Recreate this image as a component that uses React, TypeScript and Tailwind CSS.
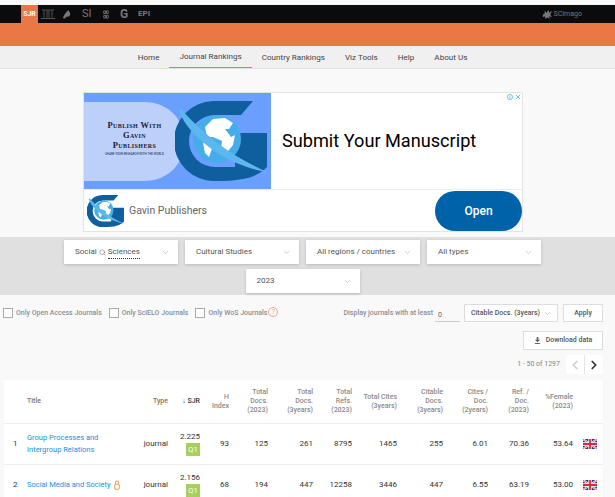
import { ChevronDown, ChevronLeft, ChevronRight, Search } from 'lucide-react'

const navItems = ['Home', 'Journal Rankings', 'Country Rankings', 'Viz Tools', 'Help', 'About Us']

const rowGrid =
    'grid grid-cols-[23px_107px_34px_32px_29px_39px_45px_39px_45px_46px_45px_41px_44px_1fr] items-center'

const headers = [
    'Type',
    'SJR',
    'H\nIndex',
    'Total\nDocs.\n(2023)',
    'Total\nDocs.\n(3years)',
    'Total\nRefs.\n(2023)',
    'Total Cites\n(3years)',
    'Citable\nDocs.\n(3years)',
    'Cites /\nDoc.\n(2years)',
    'Ref. /\nDoc.\n(2023)',
    '%Female\n(2023)',
]

const rows = [
    {
        rank: 1,
        title: 'Group Processes and Intergroup Relations',
        sjr: '2.225',
        values: ['93', '125', '261', '8795', '1465', '255', '6.01', '70.36', '53.64'],
        open: false,
    },
    {
        rank: 2,
        title: 'Social Media and Society',
        sjr: '2.156',
        values: ['68', '194', '447', '12258', '3446', '447', '6.55', '63.19', '53.00'],
        open: true,
    },
]

function GavinLogo({ className }: { className: string }) {
    return (
        <svg viewBox="0 0 92 80" className={className}>
            <path
                d="M38 0H78L66 14H40A26 26 0 0 0 40 66H60V32H92V66C82 76 70 80 40 80A40 40 0 0 1 38 0Z"
                fill="#0f5f9e"
            />
            <circle cx="42" cy="38" r="24" fill="#45aeea" />
            <path d="M30 26L38 18L50 17L58 22L54 28L50 28L56 36L60 34L58 44L50 54L46 48L47 40L38 36L32 36Z" fill="#ffffff" />
            <path d="M28 42L34 42L37 48L34 56L30 52Z" fill="#ffffff" />
            <path d="M4 10C14 36 50 64 92 71C62 58 30 36 6 8Z" fill="#5cb8ec" />
        </svg>
    )
}

function Flag() {
    return (
        <svg viewBox="0 0 14 10" className="w-[14px] h-[10px]">
            <rect width="14" height="10" fill="#27357f" />
            <path d="M0 0L14 10M14 0L0 10" stroke="#ffffff" strokeWidth="2" />
            <path d="M0 0L14 10M14 0L0 10" stroke="#d8293a" strokeWidth="0.7" />
            <path d="M7 0V10M0 5H14" stroke="#ffffff" strokeWidth="3.4" />
            <path d="M7 0V10M0 5H14" stroke="#d8293a" strokeWidth="1.8" />
        </svg>
    )
}

function Select({ label }: { label: React.ReactNode }) {
    return (
        <div className="w-[114px] h-[24px] bg-white shadow-[0_1px_3px_rgba(0,0,0,0.18)] flex items-center justify-between pl-[11px] pr-[8px] text-[8px] text-[#555]">
            <span>{label}</span>
            <ChevronDown className="w-[9px] h-[9px] text-[#bbb]" />
        </div>
    )
}

function Checkbox({ label }: { label: string }) {
    return (
        <div className="flex items-center gap-[3px]">
            <span className="w-[10px] h-[10px] border border-[#aaa] bg-white" />
            <span className="text-[7px] text-[#8a8f96] font-medium">{label}</span>
        </div>
    )
}

export default function App() {
    return (
        <div className="w-[615px] h-[497px] overflow-hidden bg-[#f9f9f9] pt-[5px] font-['Roboto','Liberation_Sans',sans-serif]">
            <div className="h-[18px] bg-[#0a0b0d] flex items-center justify-between pl-[21px] pr-[33px]">
                <div className="flex items-center h-full text-[#777] font-bold">
                    <span className="w-[17px] h-full bg-[#e8784a] text-white text-[7px] flex items-center justify-center">
                        SJR
                    </span>
                    <svg viewBox="0 0 14 10" className="w-[14px] h-[10px] ml-[3px]" fill="none" stroke="#777" strokeWidth="0.7">
                        <path d="M0 9.5H14M1 1H13M3 1.5V8.5M6 1.5V8.5M8 1.5V8.5M11 1.5V8.5" />
                    </svg>
                    <svg viewBox="0 0 12 12" className="w-[10px] h-[11px] ml-[7px]" fill="#777">
                        <path d="M1 10L3 6L6 2L8 1L10 5L9 8L5 9L3 11Z" />
                    </svg>
                    <span className="ml-[10px] w-[10px] text-[11px] font-normal">SI</span>
                    <svg viewBox="0 0 6 10" className="w-[6px] h-[9px] ml-[11px]" fill="none" stroke="#888" strokeWidth="0.8">
                        <path d="M0.5 1H2.5V4H0.5ZM3.5 1H5.5V4H3.5ZM0.5 6H2.5V9H0.5ZM3.5 6H5.5V9H3.5Z" />
                    </svg>
                    <span className="ml-[11px] w-[10px] text-[12px]">G</span>
                    <span className="ml-[8px] text-[8px]">EPI</span>
                </div>
                <div className="flex items-center gap-[1px] text-[#777] text-[7px]">
                    <svg viewBox="0 0 12 12" className="w-[11px] h-[11px]" fill="#777">
                        <path d="M1 6L3 5L3 2L5 4L7 1L8 4L11 2L9 6L11 9L8 8L8 11L6 9L4 11L3 8L1 9Z" />
                    </svg>
                    <span>SCImago</span>
                </div>
            </div>
            <div className="h-[23px] bg-[#e97844]" />
            <nav className="h-[23px] bg-[#f0f0f0] border-b border-[#e2e2e2] flex justify-center pr-[10px]">
                <div className="flex">
                    {navItems.map((item) => (
                        <div
                            key={item}
                            className={`px-[10px] flex items-center text-[8.1px] text-[#444] ${item === 'Journal Rankings' ? 'border-b border-[#e97844]' : ''}`}
                        >
                            {item}
                        </div>
                    ))}
                </div>
            </nav>

            <div className="mt-[23px] ml-[83px] w-[440px] h-[140px] bg-white border border-[#e4e4e4] relative flex flex-col">
                <div className="h-[97px] flex border-b border-[#eeeeee]">
                    <div className="w-[187px] bg-[#6a9eff] relative flex items-center overflow-hidden">
                        <div className="w-[101px] h-[79px] bg-[#bcd0fa] rounded-r-[40px] flex flex-col items-center pt-[18px] font-['Liberation_Serif',serif] font-bold text-[#1b2230] text-[8.5px] leading-[10px] tracking-[0.4px] [font-variant:small-caps]">
                            <span>Publish With</span>
                            <span>Gavin</span>
                            <span>Publishers</span>
                            <span className="font-['Roboto',sans-serif] text-[3px] leading-[8px] font-normal tracking-normal uppercase">
                                Share your research with the world
                            </span>
                        </div>
                        <GavinLogo className="absolute left-[91px] top-[8px] w-[92px] h-[80px]" />
                    </div>
                    <div className="flex-1 flex items-center pl-[11px] text-[18.15px] text-black">
                        Submit Your Manuscript
                    </div>
                </div>
                <div className="flex-1 flex items-center justify-between pl-[3px]">
                    <div className="flex items-center gap-[5px]">
                        <GavinLogo className="w-[37px] h-[36px]" />
                        <span className="text-[10.5px] text-[#666]">Gavin Publishers</span>
                    </div>
                    <div className="w-[87px] h-[40px] rounded-full bg-[#0062a8] text-white text-[12px] font-medium flex items-center justify-center">
                        Open
                    </div>
                </div>
                <div className="absolute right-[1px] top-[1px] flex items-center gap-[2px] text-[#3fb2d8]">
                    <svg viewBox="0 0 8 8" className="w-[6px] h-[6px]" fill="none" stroke="currentColor">
                        <circle cx="4" cy="4" r="3.4" />
                        <path d="M4 2V6" />
                    </svg>
                    <svg viewBox="0 0 8 8" className="w-[6px] h-[6px]" fill="none" stroke="currentColor">
                        <path d="M1 1L7 7M7 1L1 7" />
                    </svg>
                </div>
            </div>

            <div className="mt-[5px] h-[58px] bg-[#e0e0e0] flex flex-col items-center gap-[5px] pt-[3px] pr-[10px]">
                <div className="flex gap-[7px]">
                    <Select
                        label={
                            <span className="flex items-center gap-[2px]">
                                Social
                                <Search className="w-[7px] h-[7px] text-[#777]" />
                                <span className="border-b border-dotted border-[#333]">Sciences</span>
                            </span>
                        }
                    />
                    <Select label="Cultural Studies" />
                    <Select label="All regions / countries" />
                    <Select label="All types" />
                </div>
                <Select label="2023" />
            </div>

            <div className="mt-[9px] pl-[3px] pr-[12px] flex items-center justify-between h-[18px]">
                <div className="flex items-center gap-[7px]">
                    <Checkbox label="Only Open Access Journals" />
                    <Checkbox label="Only SciELO Journals" />
                    <div className="flex items-start">
                        <Checkbox label="Only WoS Journals" />
                        <span className="ml-[1px] -mt-[1px] w-[10px] h-[10px] rounded-full border border-[#f0a988] text-[#f0a988] text-[7px] leading-[9px] text-center">
                            ?
                        </span>
                    </div>
                </div>
                <div className="flex items-center">
                    <span className="text-[7px] text-[#8a8f96] font-medium">Display journals with at least</span>
                    <span className="ml-[2px] w-[25px] h-[14px] mt-[3px] border-b border-[#ccc] pl-[3px] text-[7px] text-[#666] leading-[14px]">
                        0
                    </span>
                    <div className="ml-[4px] w-[94px] h-[18px] border border-[#ddd] bg-white flex items-center justify-between pl-[6px] pr-[5px] text-[7px] text-[#555] font-medium whitespace-nowrap">
                        Citable Docs. (3years)
                        <ChevronDown className="w-[9px] h-[9px] text-[#bbb]" />
                    </div>
                    <div className="ml-[5px] w-[40px] h-[18px] border border-[#ddd] bg-white flex items-center justify-center text-[7px] text-[#555] font-medium">
                        Apply
                    </div>
                </div>
            </div>

            <div className="mt-[9px] pr-[12px] flex justify-end">
                <div className="w-[80px] h-[19px] border border-[#ddd] bg-white flex items-center justify-center gap-[5px] text-[7px] text-[#555] font-medium">
                    <svg viewBox="0 0 8 8" className="w-[7px] h-[7px]" fill="#666">
                        <path d="M3 0H5V3H7L4 6L1 3H3ZM1 6.8H7V8H1Z" />
                    </svg>
                    Download data
                </div>
            </div>

            <div className="mt-[5px] pr-[12px] flex justify-end items-center">
                <span className="text-[7px] text-[#888] mr-[6px]">1 - 50 of 1297</span>
                <div className="w-[37px] h-[19px] bg-white flex">
                    <div className="flex-1 flex items-center justify-center border-r border-[#e5e5e5]">
                        <ChevronLeft className="w-[14px] h-[14px] text-[#ccc]" strokeWidth={3} />
                    </div>
                    <div className="flex-1 flex items-center justify-center">
                        <ChevronRight className="w-[14px] h-[14px] text-[#333]" strokeWidth={3} />
                    </div>
                </div>
            </div>

            <div className="mt-[6px] ml-[4px] w-[599px] bg-white">
                <div className={`${rowGrid} h-[44px] border-b border-[#eeeeee] text-[7px] leading-[9px] text-[#8a8a8a] font-medium`}>
                    <span />
                    <span className="text-[#8b6f5c]">Title</span>
                    {headers.map((header) => (
                        <span
                            key={header}
                            className={`text-right whitespace-pre-line ${header === 'Type' ? 'text-[#8b6f5c]' : ''} ${header === 'SJR' ? 'text-[#333]' : ''}`}
                        >
                            {header === 'SJR' ? '↓ SJR' : header}
                        </span>
                    ))}
                </div>
                {rows.map((row) => (
                    <div key={row.rank} className={`${rowGrid} h-[41px] border-b border-[#eeeeee] text-[8px] text-[#333]`}>
                        <span className="pl-[9px]">{row.rank}</span>
                        <div className="flex items-center gap-[3px] text-[7.5px] leading-[12px] text-[#1a8fe0]">
                            <span className={row.open ? 'whitespace-nowrap' : ''}>{row.title}</span>
                            {row.open && (
                                <svg viewBox="0 0 7 11" className="w-[6px] h-[10px] shrink-0" fill="none" stroke="#f0a050" strokeWidth="1.2">
                                    <rect x="0.8" y="4.5" width="5.4" height="6" rx="1.5" />
                                    <path d="M1.8 4.5V2.5A1.7 1.7 0 0 1 5.2 2.5V4.5" />
                                </svg>
                            )}
                        </div>
                        <span className="text-right">journal</span>
                        <div className="flex flex-col items-end leading-[10px]">
                            <span>{row.sjr}</span>
                            <span className="mt-[1px] w-[14px] h-[13px] bg-[#a5cf5e] text-white text-[7.5px] leading-[13px] text-center">
                                Q1
                            </span>
                        </div>
                        {row.values.map((value, i) => (
                            <span key={i} className="text-right">
                                {value}
                            </span>
                        ))}
                        <div className="flex justify-end pr-[6px]">
                            <Flag />
                        </div>
                    </div>
                ))}
            </div>
        </div>
    )
}
